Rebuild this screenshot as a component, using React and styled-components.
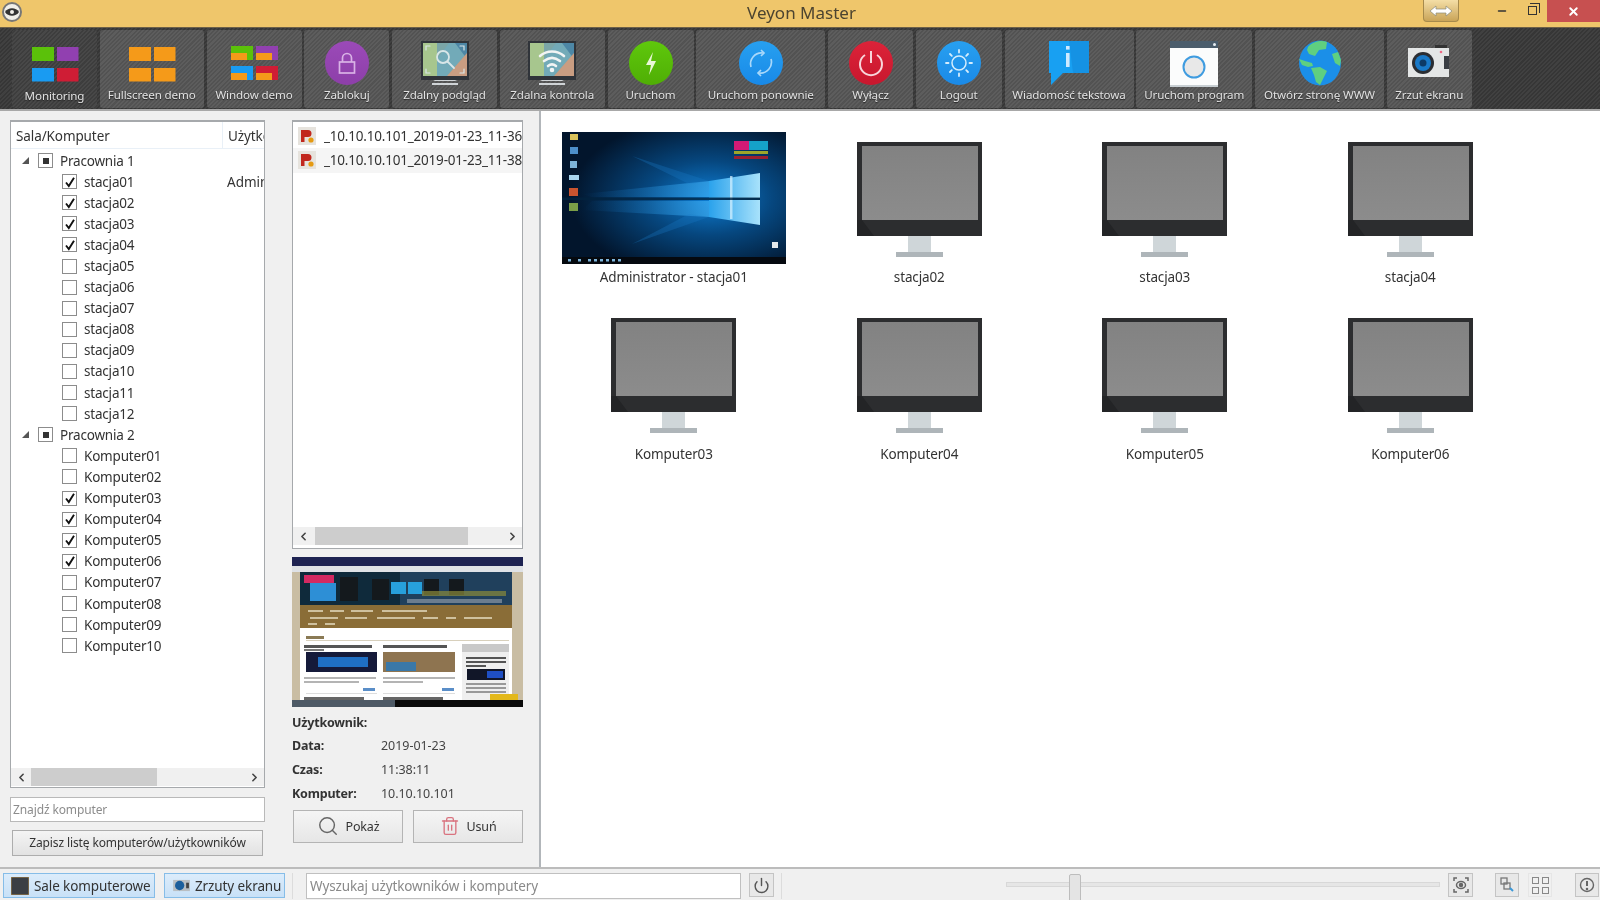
import React from 'react';
import styled, { createGlobalStyle, css } from 'styled-components';
import { ChevronLeft, ChevronRight, Search, Trash2, Power, Minus, X } from 'lucide-react';

const Global = createGlobalStyle`
  html, body { margin: 0; padding: 0; background: #f0f0f0; overflow: hidden; }
  * { box-sizing: border-box; }
`;

const Window = styled.div`
  width: 1600px; height: 900px; overflow: hidden; display: flex; flex-direction: column;
  font-family: "Noto Sans", "Open Sans", sans-serif; font-size: 13.5px; color: #333;
  background: #f0f0f0; filter: blur(0.6px);
`;

const TitleBar = styled.header`
  height: 28px; background: #efc66b; border-bottom: 1px solid #6d6048; display: grid;
  grid-template-columns: 1fr auto 1fr; flex: none;
`;
const AppLogo = styled.div`
  margin: 2px 0 0 2px; width: 20px; height: 20px; border-radius: 50%; background: #f1efe9;
  border: 2px solid #777; display: flex; align-items: center; justify-content: center;
`;
const Title = styled.h1`
  margin: 0; padding-left: 3px; font-weight: 400; font-size: 17px; line-height: 26px; color: #4c4430;
`;
const Controls = styled.div`display: flex; justify-content: flex-end; align-items: flex-start;`;
const SwapButton = styled.div`
  width: 36px; height: 22px; margin-right: 28px; border: 1px solid #a68a4c; border-top: 0; border-radius: 0 0 4px 4px;
  background: linear-gradient(#f4dea6, #c9a458); display: flex; align-items: center; justify-content: center;
`;
const WinButton = styled.div`
  width: ${p => p.$w}px; height: 22px; display: flex; align-items: center; justify-content: center;
  background: ${p => p.$close ? '#c75050' : 'transparent'}; color: ${p => p.$close ? '#fff' : '#333'};
`;
const RestoreGlyph = styled.div`
  width: 9px; height: 9px; border: 1.5px solid #333; position: relative; margin-top: -1px;
  &::after { content: ''; position: absolute; top: -4px; left: 1px; width: 9px; height: 9px; border: 1.5px solid #333; border-left: 0; border-bottom: 0; }
`;

const stripes = css`
  background-image: repeating-linear-gradient(135deg, rgba(255,255,255,.045) 0 1.5px, rgba(0,0,0,.045) 1.5px 3px);
`;
const Toolbar = styled.nav`
  height: 83px; flex: none; background-color: #383838; ${stripes}; display: flex; gap: 2.75px; padding: 2px 0 3px 12px;
  border-bottom: 2px solid #a8a8a8;
`;
const ToolButton = styled.div`
  width: ${p => p.$w}px; height: 78px; flex: none; border-radius: 3px; display: flex; flex-direction: column; align-items: center;
  padding-top: 9px; background-color: ${p => p.$active ? '#404040' : '#565656'}; ${stripes};
`;
const ToolIcon = styled.svg`width: 48px; height: 48px; flex: none; overflow: visible;`;
const ToolLabel = styled.span`
  font-size: 11.6px; line-height: 16px; color: #e2e2e2; white-space: nowrap; text-shadow: 0 1px 1px #222;
  margin-top: ${p => p.$active ? 1 : 0}px; letter-spacing: -0.12px;
`;

const Main = styled.main`flex: 1; display: flex; min-height: 0; padding: 9px 0 0 10px;`;
const LeftPane = styled.section`width: 255px; flex: none; display: flex; flex-direction: column; margin-right: 27px;`;
const Tree = styled.div`
  height: 668px; background: #fff; border: 1px solid #a6a9ac; display: flex; flex-direction: column; overflow: hidden; border-top-width: 2px; padding-bottom: 1px;
`;
const TreeHeader = styled.div`
  height: 27px; flex: none; display: flex; border-bottom: 1px solid #e9f0f7; align-items: center;
`;
const HeadCell = styled.div`
  width: ${p => p.$w}px; flex: none; height: 100%; padding-left: ${p => p.$pad}px; line-height: 29px; white-space: nowrap; overflow: hidden;
  border-right: ${p => p.$line ? '1px solid #e9f0f7' : '0'}; letter-spacing: -0.1px;
`;
const TreeBody = styled.div`flex: 1; padding-top: 1px; overflow: hidden;`;
const Row = styled.div`height: 21.1px; display: flex; align-items: center; padding-left: ${p => p.$group ? 11 : 51}px; white-space: nowrap;`;
const Expander = styled.span`
  width: 0; height: 0; border-style: solid; border-width: 0 0 7px 7px; border-color: transparent transparent #555 transparent; margin: 0 9px 0 0;
`;
const Box = styled.span`
  width: 15px; height: 15px; flex: none; border: 1px solid #8c8c8c; background: #fff; display: flex; align-items: center; justify-content: center;
  margin-right: ${p => p.$group ? 7 : 7}px;
`;
const Dot = styled.span`width: 6px; height: 6px; background: #333;`;
const RowName = styled.span`width: ${p => p.$w}px; flex: none; letter-spacing: -0.2px;`;
const Scrollbar = styled.div`
  height: 18px; flex: none; display: flex; align-items: center; background: #f0f0f0; margin-top: auto; color: #444;
`;
const Track = styled.div`flex: 1; height: 100%;`;
const Thumb = styled.div`height: 100%; width: ${p => p.$w}px; margin-left: ${p => p.$x}px; background: #cdcdcd;`;
const ScrollArrow = styled.div`width: 20px; display: flex; justify-content: center; flex: none;`;
const SmallInput = styled.div`
  height: 25px; margin-top: 9px; background: #fff; border: 1px solid #b9b9b9; color: #8c8c8c; font-size: 12px; line-height: 23px; padding-left: 2px; letter-spacing: -0.12px;
`;
const SaveButton = styled.div`
  height: 26px; margin: 8px 2px 0; background: linear-gradient(#f4f4f4, #e2e2e2); border: 1px solid #adadad; text-align: center; font-size: 12px; line-height: 24px; letter-spacing: -0.12px; white-space: nowrap;
`;

const MiddlePane = styled.section`width: 231px; flex: none; display: flex; flex-direction: column; margin-right: 16px;`;
const ShotList = styled.div`
  height: 429px; background: #fff; border: 1px solid #a6a9ac; border-top-width: 2px; display: flex; flex-direction: column; overflow: hidden; padding: 1.5px 0 3px;
`;
const ShotRow = styled.div`
  height: 24.5px; flex: none; display: flex; align-items: center; padding-left: 5px; white-space: nowrap; overflow: hidden; letter-spacing: -0.2px;
  background: ${p => p.$alt ? '#f5f5f5' : 'transparent'}; gap: 8px;
`;
const FileGlyph = styled.svg`width: 18px; height: 18px; flex: none;`;
const Preview = styled.svg`width: 231px; height: 150px; margin-top: 8px; flex: none; display: block; filter: blur(0.7px);`;
const Info = styled.dl`
  margin: 3.5px 0 0; display: grid; grid-template-columns: 89px 1fr; grid-auto-rows: 23.6px; align-items: center; font-size: 12.5px;
  dt { font-weight: 700; white-space: nowrap; letter-spacing: -0.2px; } dd { margin: 0; color: #444; letter-spacing: -0.05px; }
`;
const ActionRow = styled.div`display: flex; gap: 10px; padding-left: 1px; margin-top: 5px;`;
const ActionButton = styled.div`
  width: 110px; height: 33px; display: flex; align-items: center; justify-content: center; gap: 7px; background: linear-gradient(#f5f5f5, #e6e6e6); border: 1px solid #b4b4b4; font-size: 12.5px; letter-spacing: -0.15px;
`;

const Stage = styled.section`
  flex: 1; min-width: 0; background: #fff; border-left: 2px solid #b2b6ba; margin-top: -9px; padding: 21px 0 0 10px;
  display: grid; grid-template-columns: repeat(4, 245.5px); grid-auto-rows: 176.5px; align-content: start;
`;
const Tile = styled.figure`margin: 0; display: flex; flex-direction: column; align-items: center;`;
const TileImage = styled.div`height: 132px; display: flex; align-items: center; justify-content: center;`;
const TileLabel = styled.figcaption`margin-top: 4px; line-height: 18px; letter-spacing: -0.12px;`;
const WallpaperArt = styled.svg`width: 224px; height: 132px; display: block; filter: blur(0.6px);`;

const StatusBar = styled.footer`
  height: 33px; flex: none; border-top: 2px solid #bcbcbc; background: #f0f0f0; display: flex; align-items: flex-start; padding-top: 4px; position: relative;
`;
const ModeButton = styled.div`
  width: ${p => p.$w}px; margin-left: ${p => p.$ml}px; height: 25px; flex: none; background: linear-gradient(#dcecfb, #c8e1f7); border: 1px solid #86bde8; display: flex; align-items: center; gap: 5px; padding-left: ${p => p.$pad}px; white-space: nowrap; letter-spacing: -0.1px; line-height: 26px;
`;
const ModeIcon = styled.svg`flex: none;`;
const Divider = styled.span`width: 1px; height: 26px; background: #dcdcdc; flex: none; margin-left: ${p => p.$ml}px;`;
const SearchBox = styled.div`
  width: 435px; height: 26px; margin-left: 13px; flex: none; background: #fff; border: 1px solid #c0c0c0; color: #8a8a8a; line-height: 24px; padding-left: 3px; letter-spacing: -0.13px;
`;
const StatusButton = styled.div`
  width: ${p => p.$w || 25}px; height: 24px; flex: none; margin-left: ${p => p.$ml}px; border: 1px solid ${p => p.$flat ? '#e6e6e6' : '#c4c4c4'}; background: ${p => p.$flat ? '#f0f0f0' : '#e8e8e8'}; display: flex; align-items: center; justify-content: center; color: #666;
`;
const SliderTrack = styled.div`
  width: 434px; height: 5px; flex: none; margin: 9px 0 0 224px; background: #e6e6e6; border: 1px solid #d8d8d8; position: relative;
`;
const SliderHandle = styled.div`
  position: absolute; left: 62px; top: -9px; width: 12px; height: 29px; background: #e4e4e4; border: 1px solid #bdbdbd; border-radius: 2px;
`;
const Square = styled.span`width: 7px; height: 7px; border: 1px solid #888;`;
const GridGlyph = styled.div`display: grid; grid-template-columns: 7px 7px; gap: 3px;`;

const Circle = ({ c1, c2, children }) => (
  <ToolIcon viewBox="0 0 48 48">
    <defs><linearGradient id={`g${c1.slice(1)}`} x1="0" y1="0" x2="0" y2="1"><stop offset="0" stopColor={c1} /><stop offset="1" stopColor={c2} /></linearGradient></defs>
    <circle cx="24" cy="24" r="22" fill={`url(#g${c1.slice(1)})`} />
    {children}
  </ToolIcon>
);

const Tiles = ({ fill }) => (
  <ToolIcon viewBox="0 0 48 48">
    <rect x="1" y="8" width="22" height="14" fill={fill ? fill[0] : '#5bc10a'} />
    <rect x="26" y="8" width="21.5" height="14" fill={fill ? fill[1] : '#9140b0'} />
    <rect x="1" y="29" width="22" height="13.5" fill={fill ? fill[2] : '#199bf2'} />
    <rect x="26" y="29" width="21.5" height="13.5" fill={fill ? fill[3] : '#cf1d35'} />
  </ToolIcon>
);

const Demo = () => (
  <ToolIcon viewBox="0 0 48 48">
    <rect x="1" y="7" width="22" height="14" fill="#5bc10a" /><rect x="1" y="14" width="16" height="7" fill="#f59a19" />
    <rect x="26" y="7" width="22" height="14" fill="#9140b0" /><rect x="26" y="14" width="16" height="7" fill="#f59a19" />
    <rect x="1" y="27" width="22" height="14" fill="#199bf2" /><rect x="1" y="34" width="16" height="7" fill="#f59a19" />
    <rect x="26" y="27" width="22" height="14" fill="#cf1d35" /><rect x="26" y="34" width="16" height="7" fill="#f59a19" />
  </ToolIcon>
);

const RemoteScreen = ({ wifi }) => (
  <ToolIcon viewBox="0 0 48 48">
    <rect x="0" y="2" width="48" height="39" fill="#30343a" />
    <rect x="2" y="4" width="44" height="33" fill="#7aa6a8" />
    <path d="M2 4h14v33H2z" fill="#a7c68e" /><path d="M16 37V20l12-16h18v10L26 37z" fill="#72aab8" />
    <path d="M28 4h18v16L34 4z" fill="#4d87a6" /><path d="M26 37l20-23v23z" fill="#c99d82" />
    <path d="M12 42h24l-2-1H14zM11 44h26v2H11z" fill="#cfd3d6" />
    {wifi ? (
      <g fill="none" stroke="#f2f4f4" strokeWidth="2.6" strokeLinecap="round">
        <path d="M12 17c7-6 17-6 24 0" /><path d="M16 22c5-4 11-4 16 0" /><path d="M20 27c2.500-2 5.500-2 8 0" />
        <circle cx="24" cy="31" r="1" fill="#f2f4f4" />
      </g>
    ) : (
      <g fill="none" stroke="#d9e6e8" strokeWidth="1.8" strokeLinecap="round">
        <circle cx="22" cy="18" r="6" /><path d="M26.500 22.500L33 29" />
        <path d="M5 11V7h4M43 11V7h-4M5 30v4h4M43 30v4h-4" strokeWidth="1.2" />
      </g>
    )}
  </ToolIcon>
);

const InfoBubble = () => (
  <ToolIcon viewBox="0 0 48 48">
    <path d="M4 2h40v32H18L6 46V34H4z" fill="#18a0f2" />
    <path d="M24 2h20v32H28z" fill="#1592e4" />
    <rect x="21" y="14" width="3.600" height="14" fill="#cfeaff" /><rect x="21" y="7" width="3.600" height="3.600" fill="#cfeaff" />
  </ToolIcon>
);

const ProgramWindow = () => (
  <ToolIcon viewBox="0 0 48 48">
    <rect x="0" y="2" width="48" height="46" fill="#fbfcfc" />
    <rect x="0" y="2" width="48" height="7" fill="#4b5d6c" />
    <rect x="0" y="46" width="48" height="2" fill="#c8cfd3" />
    <circle cx="44.500" cy="5.500" r="1.500" fill="#e7eef2" />
    <circle cx="24" cy="28" r="10.500" fill="#e8e8e8" stroke="#3f9ce0" strokeWidth="2" />
  </ToolIcon>
);

const Globe = () => (
  <ToolIcon viewBox="0 0 48 48">
    <ellipse cx="24" cy="24" rx="21" ry="22.500" fill="#1b8fe8" />
    <path d="M12 8c5-6 14-7 19-5l-1 7-7 1-4 6-6-2-2-4z" fill="#5fcf80" />
    <path d="M3 20l6 2 7 2 1 3-5 1-6-2z" fill="#5fcf80" />
    <path d="M15 29l9-1 7 4-4 8-3 6-4-3-2-7z" fill="#5fcf80" />
    <path d="M36 15l6-2 3 8-1 6-5-3z" fill="#5fcf80" />
  </ToolIcon>
);

const Camera = () => (
  <ToolIcon viewBox="0 0 48 48">
    <rect x="30" y="6" width="12" height="3" fill="#333" />
    <rect x="3" y="9" width="41" height="29" fill="#e4e6e6" />
    <circle cx="18" cy="24" r="11" fill="#2b2e33" /><circle cx="18" cy="24" r="8" fill="#1979c8" /><circle cx="18" cy="24" r="3.500" fill="#0d3a66" />
    <rect x="39" y="17" width="5" height="13" fill="#3a3e44" /><circle cx="36" cy="13" r="1.300" fill="#ef6a86" />
  </ToolIcon>
);

const tools = [
  { label: 'Monitoring', w: 85, active: true, icon: <Tiles /> },
  { label: 'Fullscreen demo', w: 104, icon: <Tiles fill={['#f59a19', '#f59a19', '#f59a19', '#f59a19']} /> },
  { label: 'Window demo', w: 95, icon: <Demo /> },
  { label: 'Zablokuj', w: 85, icon: <Circle c1="#9b4ab8" c2="#8d3fa9"><g fill="none" stroke="#d9b2e6" strokeWidth="1.700"><rect x="16.500" y="23" width="15" height="11" /><path d="M19.500 23v-4a4.500 4.500 0 0 1 9 0v4" /></g></Circle> },
  { label: 'Zdalny podgląd', w: 105, icon: <RemoteScreen /> },
  { label: 'Zdalna kontrola', w: 105, icon: <RemoteScreen wifi /> },
  { label: 'Uruchom', w: 86, icon: <Circle c1="#5fc80c" c2="#4fae05"><path d="M26 13l-7 13h5l-2 10 7-14h-5z" fill="#e8f7d6" /></Circle> },
  { label: 'Uruchom ponownie', w: 129, icon: <Circle c1="#27a0f0" c2="#1889e8"><g fill="none" stroke="#a9d8fa" strokeWidth="1.700"><path d="M14 28a11 11 0 0 1 12-14" /><path d="M34 20a11 11 0 0 1-12 14" /><path d="M24 11l3 3-3 3M24 31l-3 3 3 3" /></g></Circle> },
  { label: 'Wyłącz', w: 85, icon: <Circle c1="#dc2339" c2="#c8172e"><g fill="none" stroke="#f8d5da" strokeWidth="2"><path d="M18 16a11 11 0 1 0 12 0" /><path d="M24 12v12" /></g></Circle> },
  { label: 'Logout', w: 86, icon: <Circle c1="#28a0f0" c2="#1a8ae8"><circle cx="24" cy="24" r="7" fill="none" stroke="#d5edfd" strokeWidth="1.500" /><g stroke="#d5edfd" strokeWidth="1.800" strokeLinecap="round"><path d="M24 11v2.500M24 34.500V37M11 24h2.500M34.500 24H37M15 15l1.800 1.800M31.200 31.200L33 33M33 15l-1.800 1.800M16.800 31.200L15 33" /></g></Circle> },
  { label: 'Wiadomość tekstowa', w: 129, icon: <InfoBubble /> },
  { label: 'Uruchom program', w: 116, icon: <ProgramWindow /> },
  { label: 'Otwórz stronę WWW', w: 129, icon: <Globe /> },
  { label: 'Zrzut ekranu', w: 85, icon: <Camera /> },
];

const Check = () => (
  <svg width="12" height="12" viewBox="0 0 12 12"><path d="M2 6.500L4.800 10 10 1.800" fill="none" stroke="#111" strokeWidth="1.900" /></svg>
);

const stacje = ['01', '02', '03', '04', '05', '06', '07', '08', '09', '10', '11', '12'];
const komputery = ['01', '02', '03', '04', '05', '06', '07', '08', '09', '10'];

const TreeGroup = ({ name, prefix, items, checked, user }) => (
  <>
    <Row $group><Expander /><Box $group><Dot /></Box><RowName>{name}</RowName></Row>
    {items.map(n => (
      <Row key={n}>
        <Box>{checked.includes(n) && <Check />}</Box>
        <RowName $w={143}>{prefix}{n}</RowName>
        {n === '01' && user && <span>Administrator</span>}
      </Row>
    ))}
  </>
);

const FileIcon = () => (
  <FileGlyph viewBox="0 0 18 18">
    <rect width="18" height="18" fill="#e6e3dd" />
    <path d="M3 3h7a3.500 3.500 0 0 1 0 7H6.500v5H3z" fill="#c1271d" />
    <circle cx="13" cy="13" r="2.600" fill="#e59a12" />
  </FileGlyph>
);

const Monitor = () => (
  <svg width="125" height="119" viewBox="0 -3 125 119">
    <defs><linearGradient id="scr" x1="0" y1="0" x2="0" y2="1"><stop offset="0" stopColor="#828282" /><stop offset="1" stopColor="#8c8c8c" /></linearGradient></defs>
    <rect x="0" y="0" width="125" height="94" fill="#2c2d2f" />
    <rect x="5" y="4" width="116" height="74" fill="url(#scr)" />
    <path d="M0 94V78h5l12 16z" fill="#232426" />
    <rect x="51" y="94" width="23" height="16" fill="#cfd6d9" />
    <rect x="39" y="110" width="47" height="5" fill="#aeb5b9" />
  </svg>
);

const Wallpaper = () => (
  <WallpaperArt viewBox="0 0 224 132">
    <defs>
      <radialGradient id="glow" cx="0.66" cy="0.5" r="0.62"><stop offset="0" stopColor="#0e7fd6" /><stop offset="0.45" stopColor="#06477f" /><stop offset="1" stopColor="#02152c" /></radialGradient>
      <linearGradient id="beamU" x1="0" y1="0" x2="1" y2="0"><stop offset="0" stopColor="#0a5fa8" stopOpacity="0" /><stop offset="1" stopColor="#3aaaf0" /></linearGradient>
      <linearGradient id="pane" x1="0" y1="0" x2="1" y2="0"><stop offset="0" stopColor="#2aa2ec" /><stop offset="1" stopColor="#a8e2fb" /></linearGradient>
    </defs>
    <rect width="224" height="132" fill="url(#glow)" />
    <path d="M20 62L147 49v16H30z" fill="url(#beamU)" opacity="0.75" />
    <path d="M30 69h117v16L20 78z" fill="url(#beamU)" opacity="0.75" />
    <path d="M70 24L147 49l-20 3z" fill="#1a7cc8" opacity="0.3" />
    <path d="M70 112L147 85l-20-3z" fill="#1a7cc8" opacity="0.3" />
    <path d="M147 49l51-8v25h-51zM147 68h51v25l-51-8z" fill="url(#pane)" />
    <rect x="168" y="44" width="2.500" height="43" fill="#d8f2ff" opacity="0.7" />
    <rect x="0" y="65.500" width="198" height="2.500" fill="#02233f" opacity="0.8" />
    <rect x="0" y="125" width="224" height="7" fill="#05090f" />
    <g fill="#7fb6dc">{[4, 14, 24, 30, 36, 42, 48, 54].map(x => <rect key={x} x={x + 2} y="127" width="3" height="2.500" />)}</g>
    <rect x="8" y="2" width="8" height="6" fill="#d9c25c" /><rect x="8" y="15" width="8" height="7" fill="#4d8fc9" /><rect x="8" y="29" width="7" height="7" fill="#7cb3d9" /><rect x="7" y="43" width="10" height="5" fill="#a8d4ee" /><rect x="7" y="56" width="9" height="8" fill="#c9542f" /><rect x="7" y="71" width="9" height="8" fill="#7a9e47" />
    <rect x="172" y="9" width="34" height="9" fill="#d31a75" /><rect x="187" y="9" width="19" height="9" fill="#15a2c8" />
    <rect x="172" y="19" width="34" height="3" fill="#9ea62a" /><rect x="172" y="24" width="34" height="3" fill="#9c2030" />
    <rect x="210" y="110" width="6" height="6" fill="#e3e9ec" />
  </WallpaperArt>
);

const Site = () => (
  <>
    <rect width="231" height="150" fill="#c9bda3" />
    <rect y="0" width="231" height="9" fill="#1e2352" />
    <rect y="9" width="231" height="6" fill="#dfe2e6" />
    <rect x="8" y="15" width="212" height="33" fill="#20405c" />
    <rect x="8" y="15" width="100" height="33" fill="#0f2a3b" />
    <rect x="18" y="26" width="26" height="18" fill="#2d8fd6" /><rect x="99" y="25" width="15" height="12" fill="#27a0dc" /><rect x="116" y="25" width="14" height="12" fill="#27a0dc" />
    <rect x="48" y="20" width="18" height="24" fill="#14191d" /><rect x="80" y="22" width="17" height="21" fill="#14191d" /><rect x="132" y="22" width="15" height="16" fill="#14191d" /><rect x="157" y="22" width="15" height="16" fill="#14191d" />
    <rect x="12" y="18" width="30" height="8" fill="#d32a62" /><rect x="130" y="34" width="84" height="5" fill="#8a8a3a" opacity=".7" /><rect x="115" y="42" width="95" height="4" fill="#8b97a5" opacity=".7" />
    <rect x="8" y="48" width="212" height="23" fill="#8a6d37" />
    <g fill="#cfc19e">
      <rect x="16" y="53" width="15" height="2" /><rect x="38" y="53" width="14" height="2" /><rect x="59" y="53" width="22" height="2" /><rect x="90" y="53" width="45" height="2" />
      <rect x="18" y="60" width="28" height="2" /><rect x="53" y="60" width="22" height="2" /><rect x="85" y="60" width="38" height="2" /><rect x="131" y="60" width="15" height="2" /><rect x="154" y="60" width="10" height="2" /><rect x="172" y="60" width="28" height="2" /><rect x="16" y="66" width="9" height="2" /><rect x="33" y="66" width="10" height="2" />
    </g>
    <rect x="8" y="71" width="212" height="72" fill="#fff" />
    <rect x="14" y="79" width="18" height="3" fill="#8a7a55" /><rect x="14" y="83" width="203" height="1" fill="#d8d0bc" />
    <rect x="12" y="88" width="68" height="3" fill="#555" /><rect x="12" y="92" width="20" height="2" fill="#777" /><rect x="91" y="88" width="64" height="3" fill="#555" />
    <rect x="14" y="95" width="71" height="20" fill="#151a3a" /><rect x="26" y="100" width="50" height="10" fill="#1f6fc4" />
    <rect x="91" y="95" width="72" height="20" fill="#8e7450" /><rect x="94" y="105" width="30" height="9" fill="#3a78a8" />
    <g fill="#b4b4b4"><rect x="12" y="120" width="72" height="2" /><rect x="12" y="124" width="55" height="2" /><rect x="91" y="120" width="72" height="2" /><rect x="91" y="124" width="40" height="2" /></g>
    <rect x="71" y="131" width="12" height="3" fill="#5a8ec8" /><rect x="150" y="131" width="12" height="3" fill="#5a8ec8" /><rect x="14" y="136" width="71" height="1" fill="#ddd" /><rect x="91" y="136" width="72" height="1" fill="#ddd" />
    <rect x="170" y="87" width="47" height="56" fill="#efefef" /><rect x="170" y="87" width="47" height="8" fill="#c9c9c9" />
    <rect x="174" y="100" width="40" height="2" fill="#555" /><rect x="174" y="104" width="40" height="2" fill="#555" /><rect x="174" y="108" width="20" height="2" fill="#555" />
    <rect x="175" y="112" width="38" height="11" fill="#111628" /><rect x="195" y="114" width="16" height="7" fill="#1f4fc4" />
    <g fill="#999"><rect x="174" y="126" width="40" height="2" /><rect x="174" y="130" width="40" height="2" /><rect x="174" y="134" width="40" height="2" /></g>
    <rect x="12" y="140" width="60" height="3" fill="#666" /><rect x="91" y="140" width="60" height="3" fill="#666" />
    <rect x="198" y="137" width="28" height="6" fill="#e3b81a" />
    <rect y="143" width="231" height="7" fill="#0a0a0a" /><rect y="143" width="103" height="7" fill="#4e5a66" />
  </>
);

const machines = ['stacja02', 'stacja03', 'stacja04', 'Komputer03', 'Komputer04', 'Komputer05', 'Komputer06'];

export default function App() {
  return (
    <Window>
      <Global />
      <TitleBar>
        <div>
          <AppLogo>
            <svg width="14" height="10" viewBox="0 0 14 10"><path d="M0 5c3-5 11-5 14 0-3 5-11 5-14 0z" fill="#333" /><circle cx="7" cy="5" r="2" fill="#f1efe9" /></svg>
          </AppLogo>
        </div>
        <Title>Veyon Master</Title>
        <Controls>
          <SwapButton>
            <svg width="22" height="12" viewBox="0 0 22 12"><path d="M0 6l6-5v3h10V1l6 5-6 5V8H6v3z" fill="#fff" stroke="#8a8a7a" strokeWidth=".7" /></svg>
          </SwapButton>
          <WinButton $w={30}><Minus size={12} strokeWidth={3} /></WinButton>
          <WinButton $w={30}><RestoreGlyph /></WinButton>
          <WinButton $w={53} $close><X size={13} strokeWidth={3.5} /></WinButton>
        </Controls>
      </TitleBar>

      <Toolbar>
        {tools.map(t => (
          <ToolButton key={t.label} $w={t.w} $active={t.active}>
            {t.icon}
            <ToolLabel $active={t.active}>{t.label}</ToolLabel>
          </ToolButton>
        ))}
      </Toolbar>

      <Main>
        <LeftPane>
          <Tree>
            <TreeHeader>
              <HeadCell $w={212} $pad={5} $line>Sala/Komputer</HeadCell>
              <HeadCell $w={41} $pad={5}>Użytkownik</HeadCell>
            </TreeHeader>
            <TreeBody>
              <TreeGroup name="Pracownia 1" prefix="stacja" items={stacje} checked={['01', '02', '03', '04']} user />
              <TreeGroup name="Pracownia 2" prefix="Komputer" items={komputery} checked={['03', '04', '05', '06']} />
            </TreeBody>
            <Scrollbar>
              <ScrollArrow><ChevronLeft size={13} strokeWidth={3} /></ScrollArrow>
              <Track><Thumb $w={126} $x={0} /></Track>
              <ScrollArrow><ChevronRight size={13} strokeWidth={3} /></ScrollArrow>
            </Scrollbar>
          </Tree>
          <SmallInput>Znajdź komputer</SmallInput>
          <SaveButton>Zapisz listę komputerów/użytkowników</SaveButton>
        </LeftPane>

        <MiddlePane>
          <ShotList>
            <ShotRow><FileIcon />_10.10.10.101_2019-01-23_11-36-10.png</ShotRow>
            <ShotRow $alt><FileIcon />_10.10.10.101_2019-01-23_11-38-11.png</ShotRow>
            <Scrollbar>
              <ScrollArrow><ChevronLeft size={13} strokeWidth={3} /></ScrollArrow>
              <Track><Thumb $w={153} $x={2} /></Track>
              <ScrollArrow><ChevronRight size={13} strokeWidth={3} /></ScrollArrow>
            </Scrollbar>
          </ShotList>
          <Preview viewBox="0 0 231 150"><Site /></Preview>
          <Info>
            <dt>Użytkownik:</dt><dd />
            <dt>Data:</dt><dd>2019-01-23</dd>
            <dt>Czas:</dt><dd>11:38:11</dd>
            <dt>Komputer:</dt><dd>10.10.10.101</dd>
          </Info>
          <ActionRow>
            <ActionButton><Search size={22} color="#666" strokeWidth={1.6} />Pokaż</ActionButton>
            <ActionButton><Trash2 size={20} color="#d9737f" strokeWidth={1.6} />Usuń</ActionButton>
          </ActionRow>
        </MiddlePane>

        <Stage>
          <Tile>
            <TileImage><Wallpaper /></TileImage>
            <TileLabel>Administrator - stacja01</TileLabel>
          </Tile>
          {machines.map(m => (
            <Tile key={m}>
              <TileImage><Monitor /></TileImage>
              <TileLabel>{m}</TileLabel>
            </Tile>
          ))}
        </Stage>
      </Main>

      <StatusBar>
        <ModeButton $w={152} $ml={3} $pad={7}>
          <ModeIcon width="18" height="18" viewBox="0 0 18 18"><rect width="18" height="18" fill="#3b3f44" stroke="#b08a4a" /></ModeIcon>
          Sale komputerowe
        </ModeButton>
        <ModeButton $w={121} $ml={9} $pad={8}>
          <ModeIcon width="17" height="13" viewBox="0 0 18 14"><rect y="1" width="18" height="12" fill="#b9bec2" /><circle cx="7" cy="7" r="5" fill="#1c5f9c" /><rect x="14" y="4" width="3" height="6" fill="#444" /></ModeIcon>
          Zrzuty ekranu
        </ModeButton>
        <Divider $ml={7} />
        <SearchBox>Wyszukaj użytkowników i komputery</SearchBox>
        <StatusButton $ml={8}><Power size={17} strokeWidth={2} color="#555" /></StatusButton>
        <Divider $ml={7} />
        <SliderTrack><SliderHandle /></SliderTrack>
        <StatusButton $ml={8}>
          <svg width="16" height="16" viewBox="0 0 16 16" fill="none" stroke="#666" strokeWidth="1.500"><path d="M1 4V1h3M12 1h3v3M1 12v3h3M15 12v3h-3" /><ellipse cx="8" cy="8" rx="4.500" ry="3.500" /><circle cx="8" cy="8" r="1.500" fill="#666" /></svg>
        </StatusButton>
        <StatusButton $ml={22} $w={24}>
          <svg width="16" height="16" viewBox="0 0 16 16" fill="none" stroke="#777" strokeWidth="1.300"><rect x="2" y="1" width="6" height="6" /><rect x="5" y="6" width="6" height="6" /><path d="M11 11l3 3" stroke="#3a98d8" strokeWidth="2" /></svg>
        </StatusButton>
        <StatusButton $ml={9} $w={24} $flat>
          <GridGlyph><Square /><Square /><Square /><Square /></GridGlyph>
        </StatusButton>
        <StatusButton $ml={23} $w={24}>
          <svg width="16" height="16" viewBox="0 0 16 16" fill="none" stroke="#666" strokeWidth="1.400"><circle cx="8" cy="8" r="6.500" /><path d="M8 4v5" strokeWidth="2" /><circle cx="8" cy="12" r=".6" /></svg>
        </StatusButton>
      </StatusBar>
    </Window>
  );
}
